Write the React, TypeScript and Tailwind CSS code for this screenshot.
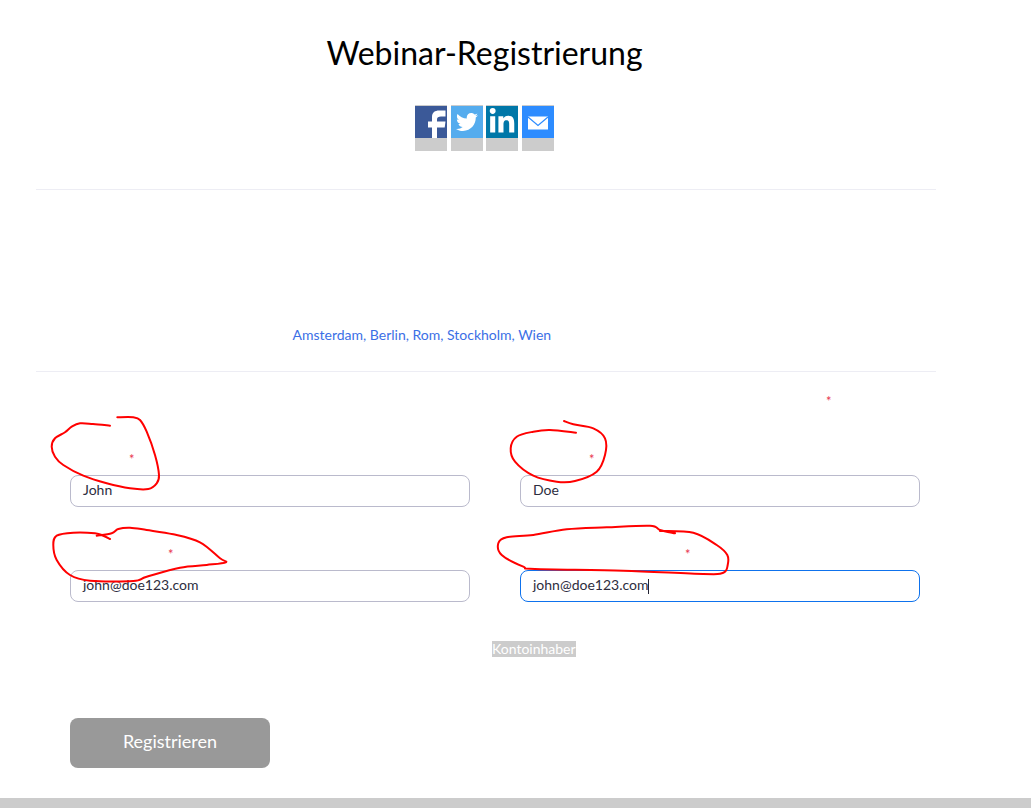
import { FaLinkedinIn, FaTwitter } from "react-icons/fa";

const scribbles: [number, number][][] = [
  [[110, 425.7], [93, 424], [80, 423.3], [71.7, 426.7], [65, 432.3], [55, 438.3], [51.7, 446.7], [55, 456.7], [63.3, 465], [83.3, 475.7], [106.7, 483.3], [130, 488.3], [148.3, 489], [156.7, 483.3], [159, 475], [155, 455], [146.7, 431.7], [140, 420], [133.3, 417.3], [117.3, 417.3]],
  [[110, 539], [103.3, 535.7], [95, 533.3], [73.3, 532.7], [56.7, 535.7], [53.3, 545], [56.7, 560], [70, 575], [90, 580.7], [133.3, 581], [146.7, 576.7], [180, 567.7], [206.7, 565], [225.7, 562.3], [220, 558.3], [200, 542.3], [173.3, 534.3], [146.7, 530], [130, 527.7], [118.3, 529], [111.7, 533.3], [96.7, 535.7]],
  [[576, 432.7], [550, 430], [533.3, 431.7], [516.7, 436.7], [510.7, 448.3], [515, 461.7], [533.3, 475.7], [556.7, 481.7], [575, 481], [596.7, 471.7], [605, 455], [605, 438.3], [593.3, 428.3], [573.3, 424.3], [564, 421]],
  [[675, 533.3], [660, 530], [650, 525.7], [606.7, 527.3], [566.7, 529.3], [533.3, 535], [506.7, 537.3], [498.3, 543.3], [501.7, 555], [523.3, 566.7], [535, 569], [623.3, 570.7], [703.3, 574], [723.3, 572.7], [727.7, 565], [727.3, 555], [716.7, 545], [693.3, 532.7], [660, 531]],
];

// smooth line through the pen points
function toPath(pts: [number, number][]) {
  let d = `M${pts[0][0]} ${pts[0][1]}`;
  for (let i = 0; i < pts.length - 1; i++) {
    const p0 = pts[i - 1] ?? pts[i];
    const p1 = pts[i];
    const p2 = pts[i + 1];
    const p3 = pts[i + 2] ?? p2;
    const c1x = p1[0] + (p2[0] - p0[0]) / 6;
    const c1y = p1[1] + (p2[1] - p0[1]) / 6;
    const c2x = p2[0] - (p3[0] - p1[0]) / 6;
    const c2y = p2[1] - (p3[1] - p1[1]) / 6;
    d += ` C${c1x} ${c1y} ${c2x} ${c2y} ${p2[0]} ${p2[1]}`;
  }
  return d;
}

function ShareTile({ color, children }: { color: string; children: React.ReactNode }) {
  return (
    <div className="w-8 h-[46px] bg-[#cccccc] pt-px">
      <div className={`w-8 h-8 flex items-center justify-center overflow-hidden ${color}`}>{children}</div>
    </div>
  );
}

function Field({ star, value, focused }: { star: string; value: string; focused?: boolean }) {
  return (
    <div className="w-[400px]">
      <div className={`h-[26px] flex items-center text-[13px] leading-none text-[#e8344e] ${star}`}>*</div>
      <div
        className={`h-8 mt-[3px] rounded-lg border bg-white px-3 pb-[3px] flex items-center text-[14px] text-[#2d2d40] ${
          focused ? "border-[#0e72ed]" : "border-[#babacc]"
        }`}>
        {value}
        {focused && <span className="w-px h-[15px] mt-[3px] bg-[#232333]" />}
      </div>
    </div>
  );
}

export default function App() {
  return (
    <div className="relative h-[808px] overflow-hidden bg-white font-['Lato',sans-serif] flex flex-col">
      <main className="flex-1 w-[900px] ml-9">
        <h1 className="pt-[33px] pr-[3px] text-[32px] leading-[40px] text-center text-black">Webinar-Registrierung</h1>
        <div className="mt-[32px] flex justify-center gap-[3.5px] pr-[3px]">
          <ShareTile color="bg-[#3b5998]">
            <svg viewBox="0 0 32 32" className="w-8 h-8">
              <path fill="#fff" d="M17 32V21.5h-4v-6h4V11C17 6.5 20 4.5 24 4.5h6.5v6H26c-2.5 0-4 .8-4 3v2h8.5l-.8 6H22V32z" />
            </svg>
          </ShareTile>
          <ShareTile color="bg-[#55acee]">
            <FaTwitter className="w-[22px] h-[22px] text-white" />
          </ShareTile>
          <ShareTile color="bg-[#0077a8]">
            <FaLinkedinIn className="w-[28px] h-[28px] text-white" />
          </ShareTile>
          <ShareTile color="bg-[#2d8cff]">
            <svg viewBox="0 0 32 32" className="w-8 h-8">
              <rect x="6" y="10.5" width="20" height="13" fill="#fff" />
              <path d="M6 11 16 19.5 26 11" fill="none" stroke="#2d8cff" strokeWidth="1.2" />
            </svg>
          </ShareTile>
        </div>
        <div className="mt-[38px] h-px bg-[#ededf4]" />
        <div className="h-[181px] pl-[256.5px] pt-[135px] text-[14px] leading-[20px] text-[#3b6fe6]">
          Amsterdam, Berlin, Rom, Stockholm, Wien
        </div>
        <div className="h-px bg-[#ededf4]" />
        <div className="h-[30px] pl-[790px] pt-[24px] text-[13px] leading-[10px] text-[#e8344e]">*</div>

        <div className="pl-[34px] pt-[44px] flex flex-col gap-[10px]">
          <div className="flex gap-[50px]">
            <Field star="pl-[59px]" value="John" />
            <Field star="pl-[69px]" value="Doe" />
          </div>
          <div className="pt-[24px] flex gap-[50px]">
            <Field star="pl-[98px]" value="john@doe123.com" />
            <Field star="pl-[165px]" value="john@doe123.com" focused />
          </div>
        </div>

        <div className="mt-[39px] pl-[456px] h-[16px] flex">
          <span className="bg-[#cccccc] text-white text-[14px] leading-[16px]">Kontoinhaber</span>
        </div>
        <button className="ml-[34px] mt-[61px] block w-[200px] h-[50px] pb-[3px] rounded-lg bg-[#999999] text-white text-[18px]">
          Registrieren
        </button>
      </main>
      <div className="h-[10px] bg-[#cccccc]" />

      {/* pen marks drawn over the form */}
      <svg className="absolute inset-0 pointer-events-none" width="1031" height="808" viewBox="0 0 1031 808" fill="none">
        {scribbles.map((pts, i) => (
          <path key={i} d={toPath(pts)} stroke="#ff0000" strokeWidth="2" strokeLinecap="round" strokeLinejoin="round" />
        ))}
      </svg>
    </div>
  );
}
